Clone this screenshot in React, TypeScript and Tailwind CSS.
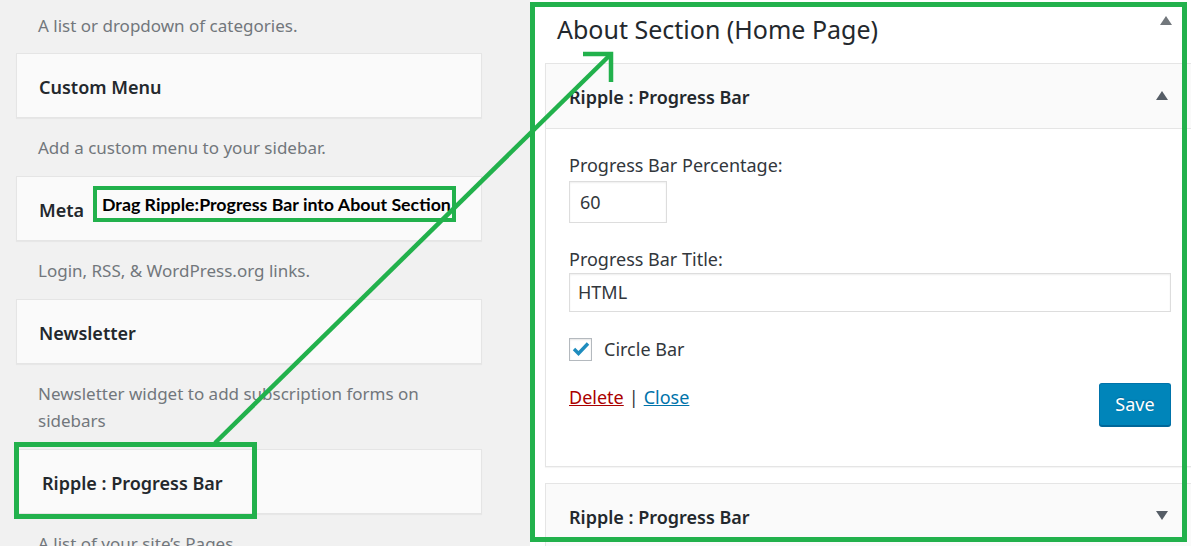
const LEFT_WIDGETS = [
  { title: "Custom Menu", desc: "Add a custom menu to your sidebar." },
  { title: "Meta", desc: "Login, RSS, & WordPress.org links." },
  { title: "Newsletter", desc: "Newsletter widget to add subscription forms on sidebars" },
  { title: "Ripple : Progress Bar", desc: "A list of your site’s Pages.", dragged: true },
];

function Triangle({ up, className }: { up: boolean; className: string }) {
  return (
    <svg width="12" height="9" viewBox="0 0 12 9" className={className}>
      <polygon points={up ? "6,0 12,9 0,9" : "0,0 12,0 6,9"} fill="currentColor" />
    </svg>
  );
}

function WidgetCard({ title, dragged }: { title: string; dragged?: boolean }) {
  return (
    <div className="flex h-[65px] items-center border border-[#e5e5e5] bg-[#fafafa] pt-[3px] shadow-[0_1px_1px_rgba(0,0,0,0.04)]">
      <h3 className={`${dragged ? "pl-[25px]" : "pl-[22px]"} text-[18px] font-semibold text-[#23282d]`}>{title}</h3>
    </div>
  );
}

function WidgetHeader({ up }: { up: boolean }) {
  return (
    <div className="flex h-[64px] items-center justify-between bg-[#fafafa] pl-[23px] pr-[36px] pt-[3px]">
      <h3 className="text-[18px] font-semibold text-[#23282d]">Ripple : Progress Bar</h3>
      <Triangle up={up} className="mt-[-4px] text-[#555d66]" />
    </div>
  );
}

export default function App() {
  return (
    <div className="relative h-[546px] w-[1191px] overflow-hidden bg-[#f1f1f1] font-['Noto_Sans',sans-serif]">
      <div className="flex h-full">
        {/* Available widgets */}
        <div className="w-[530px] shrink-0 pl-4 pr-[48px] pt-[12px]">
          <p className="pb-[14px] pl-[22px] text-[17px] leading-[27px] text-[#72777c]">A list or dropdown of categories.</p>
          {LEFT_WIDGETS.map((w) => (
            <div key={w.title}>
              <WidgetCard title={w.title} dragged={w.dragged} />
              <p className="pb-[15px] pl-[22px] pr-[22px] pt-4 text-[17px] leading-[27px] text-[#72777c]">{w.desc}</p>
            </div>
          ))}
        </div>

        {/* Sidebar area */}
        <div className="min-w-0 flex-1 overflow-hidden bg-white">
          <div className="flex items-start justify-between pl-[27px] pr-[19px] pt-[13px]">
            <h2 className="text-[25px] leading-[32px] text-[#23282d]">About Section (Home Page)</h2>
            <Triangle up className="mt-[3px] text-[#72777c]" />
          </div>
          <div className="ml-[15px] mt-[18px] w-[660px]">
            <div className="border border-[#e5e5e5] shadow-[0_1px_1px_rgba(0,0,0,0.04)]">
              <WidgetHeader up />
              <div className="border-t border-[#e5e5e5] bg-white pb-[40px] pl-[23px] pt-[24px]">
                <div className="w-[602px] text-[18px] text-[#32373c]">
                  <label className="block leading-[24px]">Progress Bar Percentage:</label>
                  <div className="mt-[4px] flex h-[42px] w-[98px] items-center border border-[#ddd] pl-[10px] shadow-[inset_0_1px_2px_rgba(0,0,0,0.07)]">60</div>
                  <label className="mt-[24px] block leading-[24px]">Progress Bar Title:</label>
                  <div className="mt-[2px] flex h-[39px] w-[602px] items-center border border-[#ddd] pl-[8px] shadow-[inset_0_1px_2px_rgba(0,0,0,0.07)]">HTML</div>
                  <div className="mt-[25px] flex items-center gap-[12px]">
                    <span className="flex h-[23px] w-[23px] items-center justify-center border border-[#b4b9be] bg-white shadow-[inset_0_1px_2px_rgba(0,0,0,0.1)]">
                      <svg width="18" height="16" viewBox="0 0 18 16">
                        <path d="M2 8 L6.5 12.5 L16 2.5" fill="none" stroke="#1e8cbe" strokeWidth="3.4" />
                      </svg>
                    </span>
                    <span className="leading-[24px]">Circle Bar</span>
                  </div>
                  <div className="mt-[22px] flex items-start justify-between">
                    <div className="mt-[2px] leading-[24px]">
                      <a className="text-[#a00] underline">Delete</a>
                      <span className="px-[5px]">|</span>
                      <a className="text-[#0073aa] underline">Close</a>
                    </div>
                    <button className="h-[43px] w-[72px] rounded-[3px] border border-[#0073aa] border-b-[#006799] bg-[#0085ba] text-[18px] text-white shadow-[0_1px_0_#006799] [text-shadow:0_-1px_1px_#006799]">
                      Save
                    </button>
                  </div>
                </div>
              </div>
            </div>
            <div className="mt-[16px] border border-[#e5e5e5]">
              <WidgetHeader up={false} />
            </div>
          </div>
        </div>
      </div>

      {/* Annotations */}
      <div className="absolute left-[530px] top-[2px] h-[540px] w-[657px] border-[5px] border-[#22b14c]" />
      <div className="absolute left-[14px] top-[442px] h-[77px] w-[243px] border-[5px] border-[#22b14c]" />
      <div className="absolute left-[93px] top-[186px] flex h-[36px] w-[363px] items-center border-4 border-[#22b14c] bg-[#fafafa] pl-[5px] font-['Lato',sans-serif] text-[17.8px] font-bold text-black">
        Drag Ripple:Progress Bar into About Section
      </div>
      <svg className="pointer-events-none absolute left-0 top-0" width="1191" height="546">
        <line x1="215" y1="443" x2="609" y2="56" stroke="#22b14c" strokeWidth="4.5" />
        <polyline points="583,54 611,54 611,82" fill="none" stroke="#22b14c" strokeWidth="4.5" />
      </svg>
    </div>
  );
}
